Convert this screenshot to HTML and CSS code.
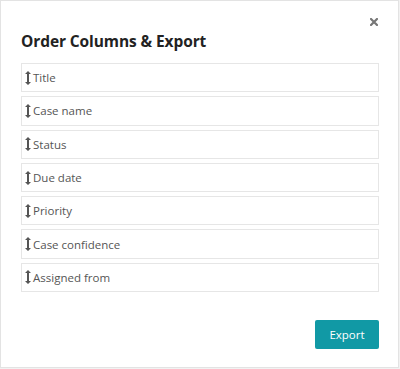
FILE: index.html
```html
<!DOCTYPE html>
<html>
<head>
<meta charset="utf-8">
<link rel="stylesheet" href="styles.css">
</head>
<body>
<div class="modal">
  <div class="head">
    <svg class="close" width="8" height="8" viewBox="0 0 8 8"><path d="M1 1 L7 7 M7 1 L1 7" stroke="#777" stroke-width="2.2" stroke-linecap="square"/></svg>
  </div>
  <h2 class="title">Order Columns &amp; Export</h2>
  <ul class="cols">
    <li class="col"><svg class="grip" width="6" height="14" viewBox="0 0 6 14"><path d="M3 0 L6 3 H4 V11 H6 L3 14 L0 11 H2 V3 H0 Z" fill="#555"/></svg><span>Title</span></li>
    <li class="col"><svg class="grip" width="6" height="14" viewBox="0 0 6 14"><path d="M3 0 L6 3 H4 V11 H6 L3 14 L0 11 H2 V3 H0 Z" fill="#555"/></svg><span>Case name</span></li>
    <li class="col"><svg class="grip" width="6" height="14" viewBox="0 0 6 14"><path d="M3 0 L6 3 H4 V11 H6 L3 14 L0 11 H2 V3 H0 Z" fill="#555"/></svg><span>Status</span></li>
    <li class="col"><svg class="grip" width="6" height="14" viewBox="0 0 6 14"><path d="M3 0 L6 3 H4 V11 H6 L3 14 L0 11 H2 V3 H0 Z" fill="#555"/></svg><span>Due date</span></li>
    <li class="col"><svg class="grip" width="6" height="14" viewBox="0 0 6 14"><path d="M3 0 L6 3 H4 V11 H6 L3 14 L0 11 H2 V3 H0 Z" fill="#555"/></svg><span>Priority</span></li>
    <li class="col"><svg class="grip" width="6" height="14" viewBox="0 0 6 14"><path d="M3 0 L6 3 H4 V11 H6 L3 14 L0 11 H2 V3 H0 Z" fill="#555"/></svg><span>Case confidence</span></li>
    <li class="col"><svg class="grip" width="6" height="14" viewBox="0 0 6 14"><path d="M3 0 L6 3 H4 V11 H6 L3 14 L0 11 H2 V3 H0 Z" fill="#555"/></svg><span>Assigned from</span></li>
  </ul>
  <div class="foot">
    <button class="btn">Export</button>
  </div>
</div>
</body>
</html>
```
FILE: styles.css
```css
html, body {
  margin: 0;
  padding: 0;
  background: #f2f2f2;
}
body {
  font-family: "Open Sans", "Noto Sans", sans-serif;
  width: 400px;
  height: 369px;
}
.modal {
  box-sizing: border-box;
  width: 399px;
  height: 368px;
  background: #fff;
  border: 1px solid #e3e3e3;
  padding: 0 19px 0 20px;
}
.head {
  height: 28px;
  display: flex;
  justify-content: flex-end;
  align-items: flex-start;
}
.close {
  margin-top: 17px;
  margin-right: 1px;
}
.title {
  margin: 0;
  font-size: 15.5px;
  font-weight: bold;
  color: #222;
  line-height: 24px;
  height: 34px;
  letter-spacing: -0.1px;
}
.cols {
  list-style: none;
  margin: 0;
  padding: 0;
  display: flex;
  flex-direction: column;
  gap: 4px;
}
.col {
  box-sizing: border-box;
  height: 29.3px;
  border: 1px solid #e6e6e6;
  display: flex;
  align-items: center;
  padding-left: 3px;
  font-size: 11.5px;
  color: #555;
  gap: 2px;
}
.grip {
  flex: none;
}
.foot {
  display: flex;
  justify-content: flex-end;
  padding-top: 28px;
}
.btn {
  width: 64px;
  height: 29px;
  background: #1199a5;
  color: #fff;
  border: none;
  border-radius: 2px;
  font-family: inherit;
  font-size: 11.5px;
  padding: 0;
}
```
